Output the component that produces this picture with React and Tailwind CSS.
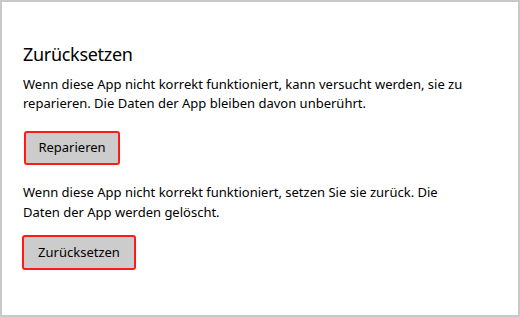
export default function App() {
  return (
    <div className="w-[520px] h-[317px] bg-white border-2 border-[#c9c9c9] overflow-hidden" style={{ fontFamily: "'Segoe UI', 'Noto Sans', sans-serif" }}>
      <div className="pl-[21px] pt-[38px] text-black">
        <h1 className="text-[18px] leading-[28px] font-normal tracking-[-0.3px]">Zurücksetzen</h1>
        <p className="mt-[7px] text-[13px] leading-[19px] w-[452px]">
          Wenn diese App nicht korrekt funktioniert, kann versucht werden, sie zu reparieren. Die Daten der App bleiben davon unberührt.
        </p>
        <button className="mt-[18px] ml-[1px] w-[96px] h-[34px] bg-[#cccccc] border-2 border-[#ff1a1a] rounded-[3px] text-[13px]">
          Reparieren
        </button>
        <p className="mt-[17px] text-[13px] leading-[20px] w-[452px]">
          Wenn diese App nicht korrekt funktioniert, setzen Sie sie zurück. Die Daten der App werden gelöscht.
        </p>
        <button className="mt-[13px] -ml-[1px] w-[114px] h-[35px] bg-[#cccccc] border-2 border-[#ff1a1a] rounded-[3px] text-[13px]">
          Zurücksetzen
        </button>
      </div>
    </div>
  );
}
